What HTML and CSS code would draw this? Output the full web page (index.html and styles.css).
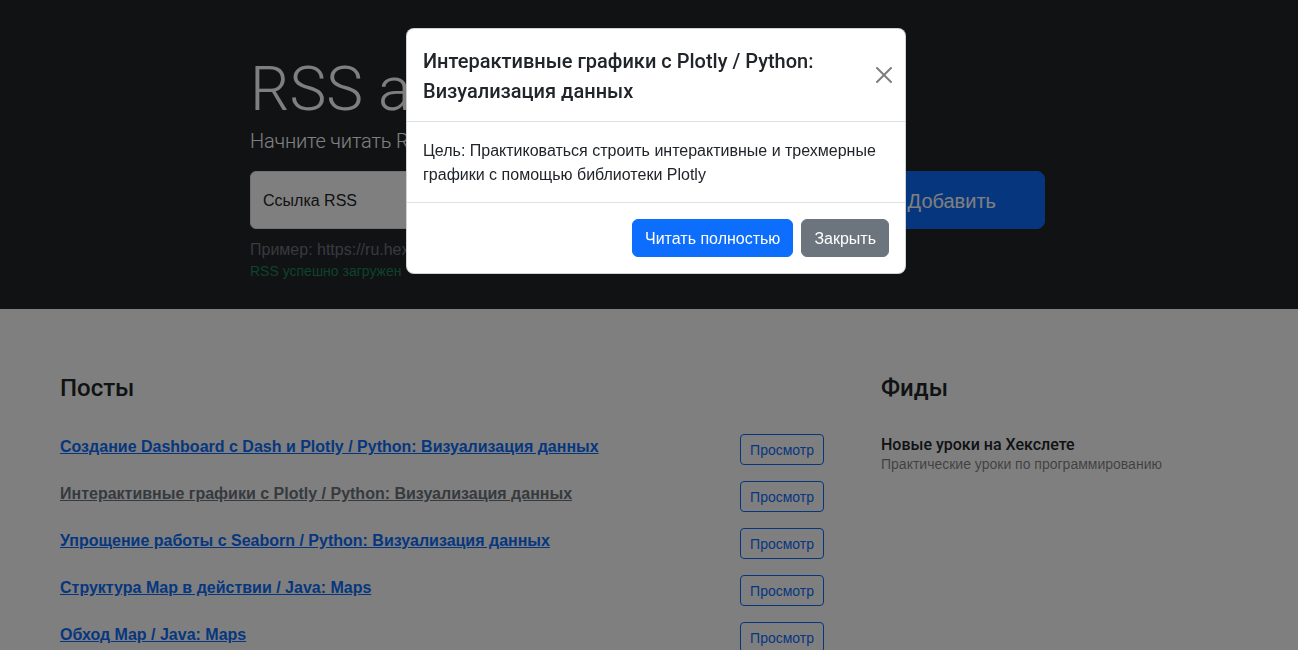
FILE: index.html
```html
<!DOCTYPE html>
<html lang="ru">
<head>
<meta charset="utf-8">
<title>RSS агрегатор</title>
<link rel="stylesheet" href="styles.css">
</head>
<body class="modal-open">
  <main>
    <section class="hero">
      <div class="hero-inner">
        <h1 class="display">RSS агрегатор</h1>
        <p class="lead">Начните читать RSS сегодня! Это легко, это красиво.</p>
        <form class="rss-form">
          <div class="form-floating">
            <input class="form-control" type="text" aria-label="url" placeholder="ссылка RSS">
            <label class="floating-label">Ссылка RSS</label>
          </div>
          <button type="button" class="btn btn-lg btn-primary">Добавить</button>
        </form>
        <p class="example">Пример: https://ru.hexlet.io/lessons.rss</p>
        <p class="feedback">RSS успешно загружен</p>
      </div>
    </section>

    <section class="content">
      <div class="posts">
        <div class="card-body posts-head">
          <h2 class="card-title">Посты</h2>
        </div>
        <ul class="list-group">
          <li class="post-item"><a class="post-link" href="#">Создание Dashboard с Dash и Plotly / Python: Визуализация данных</a><button type="button" class="btn btn-sm btn-outline-primary">Просмотр</button></li>
          <li class="post-item"><a class="post-link visited" href="#">Интерактивные графики с Plotly / Python: Визуализация данных</a><button type="button" class="btn btn-sm btn-outline-primary">Просмотр</button></li>
          <li class="post-item"><a class="post-link" href="#">Упрощение работы с Seaborn / Python: Визуализация данных</a><button type="button" class="btn btn-sm btn-outline-primary">Просмотр</button></li>
          <li class="post-item"><a class="post-link" href="#">Структура Map в действии / Java: Maps</a><button type="button" class="btn btn-sm btn-outline-primary">Просмотр</button></li>
          <li class="post-item"><a class="post-link" href="#">Обход Map / Java: Maps</a><button type="button" class="btn btn-sm btn-outline-primary">Просмотр</button></li>
        </ul>
      </div>
      <div class="feeds">
        <div class="card-body">
          <h2 class="card-title">Фиды</h2>
        </div>
        <ul class="list-group">
          <li class="feed-item">
            <h3 class="feed-title">Новые уроки на Хекслете</h3>
            <p class="feed-desc">Практические уроки по программированию</p>
          </li>
        </ul>
      </div>
    </section>
  </main>

  <div class="modal-backdrop"></div>

  <div class="modal" role="dialog" aria-modal="true">
    <div class="modal-content">
      <div class="modal-header">
        <h5 class="modal-title">Интерактивные графики с Plotly / Python: Визуализация данных</h5>
        <button type="button" class="btn-close" aria-label="Close">
          <svg viewBox="0 0 16 16" width="16" height="16" aria-hidden="true"><path d="M.293.293a1 1 0 0 1 1.414 0L8 6.586 14.293.293a1 1 0 1 1 1.414 1.414L9.414 8l6.293 6.293a1 1 0 0 1-1.414 1.414L8 9.414l-6.293 6.293a1 1 0 0 1-1.414-1.414L6.586 8 .293 1.707a1 1 0 0 1 0-1.414z"/></svg>
        </button>
      </div>
      <div class="modal-body">Цель: Практиковаться строить интерактивные и трехмерные графики с помощью библиотеки Plotly</div>
      <div class="modal-footer">
        <a class="btn btn-primary" href="#">Читать полностью</a>
        <button type="button" class="btn btn-secondary">Закрыть</button>
      </div>
    </div>
  </div>
</body>
</html>
```
FILE: styles.css
```css
*, *::before, *::after { box-sizing: border-box; }

html, body { height: 100%; }

body {
  margin: 0;
  font-family: "Liberation Sans", Arial, sans-serif;
  font-size: 16px;
  line-height: 1.5;
  color: #212529;
  background: #fff;
}

body.modal-open { overflow: hidden; }

h1, h2, h3, h5 {
  font-family: Roboto, "Liberation Sans", sans-serif;
  font-weight: 500;
  margin: 0;
}

p { margin: 0; }

/* ---------- hero ---------- */
.hero {
  background: #212529;
  padding: 48px 48px 27px;
}

.hero-inner {
  width: 795px;
  margin: 0 0 0 202px;
  color: #fff;
}

.display {
  font-weight: 300;
  font-size: 62px;
  line-height: 72px;
  padding-top: 5px;
}

.lead {
  font-family: Roboto, "Liberation Sans", sans-serif;
  font-size: 20px;
  font-weight: 300;
  line-height: 30px;
  letter-spacing: -0.2px;
  padding-top: 1px;
  margin-bottom: 15px;
}

.rss-form {
  display: flex;
  gap: 24px;
  align-items: stretch;
}

.form-floating {
  flex: 1;
  position: relative;
}

.form-control {
  display: block;
  width: 100%;
  height: 58px;
  padding: 16px 12px;
  font: inherit;
  color: #212529;
  background: #fff;
  border: 1px solid #dee2e6;
  border-radius: 6px;
}

.form-control::placeholder { color: transparent; }

.floating-label {
  position: absolute;
  top: 0;
  left: 0;
  padding: 18px 13px 16px;
  line-height: 24px;
  color: #212529;
  pointer-events: none;
}

.example {
  margin-top: 8px;
  padding-top: 1px;
  line-height: 23px;
  color: #6c757d;
}

.feedback {
  font-size: 14px;
  line-height: 21px;
  color: #198754;
}

/* ---------- buttons ---------- */
.btn {
  display: inline-block;
  font-family: inherit;
  font-size: 16px;
  line-height: 24px;
  padding: 6px 12px;
  border: 1px solid transparent;
  border-radius: 6px;
  text-decoration: none;
  text-align: center;
  cursor: pointer;
  white-space: nowrap;
}

.btn-primary { background: #0d6efd; border-color: #0d6efd; color: #fff; }
.btn-secondary { background: #6c757d; border-color: #6c757d; color: #fff; }

.modal-footer .btn { padding: 7px 12px 5px; }

.btn-lg {
  font-size: 20px;
  line-height: 30px;
  padding: 9px 48px 7px;
  border-radius: 8px;
}

.btn-sm {
  font-size: 14px;
  line-height: 21px;
  padding: 5px 9px 3px;
  border-radius: 4px;
}

.btn-outline-primary {
  background: transparent;
  color: #0d6efd;
  border-color: #0d6efd;
}

/* ---------- content ---------- */
.content {
  display: grid;
  grid-template-columns: 1fr 385px;
  column-gap: 24px;
  padding: 48px;
}

.card-body { padding: 16px; }
.posts-head { padding-left: 12px; }

.card-title {
  font-size: 24px;
  line-height: 28.8px;
  padding-top: 1px;
  margin-bottom: 7px;
}

.list-group {
  list-style: none;
  margin: 0;
  padding: 0;
}

.post-item {
  display: flex;
  justify-content: space-between;
  align-items: flex-start;
  padding: 8px 17px 8px 12px;
}

.post-link {
  font-weight: 700;
  color: #0d6efd;
  text-decoration: underline;
  padding-top: 1px;
}

.post-link.visited { color: #6c757d; }

.feed-item { padding: 8px 16px; }

.feed-title {
  font-size: 16px;
  line-height: 19.2px;
  padding-top: 1px;
}

.feed-desc {
  font-size: 14px;
  line-height: 21px;
  color: rgba(0, 0, 0, .5);
}

/* ---------- modal ---------- */
.modal-backdrop {
  position: fixed;
  inset: 0;
  background: rgba(0, 0, 0, .5);
}

.modal {
  position: fixed;
  top: 28px;
  left: 406px;
  width: 500px;
}

.modal-content {
  background: #fff;
  border: 1px solid rgba(0, 0, 0, .175);
  border-radius: 8px;
}

.modal-header {
  display: flex;
  align-items: center;
  padding: 17px 16px 15px;
  border-bottom: 1px solid #dee2e6;
}

.modal-title {
  font-size: 20px;
  line-height: 30px;
  color: #212529;
}

.btn-close {
  flex: none;
  width: 16px;
  height: 16px;
  box-sizing: content-box;
  padding: 4px;
  margin: -9px -7px -7px auto;
  border: 0;
  background: transparent;
  opacity: .5;
  cursor: pointer;
  display: flex;
  align-items: center;
  justify-content: center;
}

.btn-close svg { display: block; fill: #000; }

.modal-body { padding: 17px 16px 15px; }

.modal-footer {
  display: flex;
  justify-content: flex-end;
  align-items: center;
  padding: 12px;
  border-top: 1px solid #dee2e6;
}

.modal-footer .btn { margin: 4px; }
```
